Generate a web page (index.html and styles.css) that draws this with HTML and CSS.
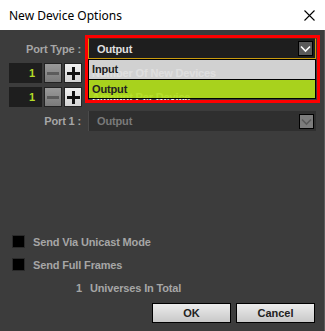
FILE: index.html
```html
<!DOCTYPE html>
<html lang="en">
<head>
  <meta charset="UTF-8">
  <meta name="viewport" content="width=device-width, initial-scale=1.0">
  <title>New Device Options</title>
  <link rel="stylesheet" href="styles.css">
</head>
<body>

<div class="window">
  <div class="titlebar">
    <span class="title">New Device Options</span>
    <svg class="close" width="11" height="11" viewBox="0 0 11 11">
      <path d="M0.5 0.5 L10.5 10.5 M10.5 0.5 L0.5 10.5" stroke="#000" stroke-width="1.1" fill="none"/>
    </svg>
  </div>

  <div class="content">
    <div class="row">
      <span class="field-label">Port Type :</span>
      <div class="select select-open">
        <span class="select-value">Output</span>
        <span class="select-arrow">
          <svg width="13" height="13" viewBox="0 0 13 13"><path d="M2 4.5 L6.5 9 L11 4.5" stroke="#fff" stroke-width="1.6" fill="none"/></svg>
        </span>
        <ul class="dropdown">
          <li>Input</li>
          <li class="selected">Output</li>
        </ul>
        <div class="highlight"></div>
      </div>
    </div>

    <div class="row">
      <div class="stepper">
        <span class="stepper-value">1</span>
        <span class="stepper-btn minus">
          <svg width="16" height="18" viewBox="0 0 16 18"><rect x="2" y="8" width="12" height="3" fill="#5c5c5c"/></svg>
        </span>
        <span class="stepper-btn plus">
          <svg width="16" height="18" viewBox="0 0 16 18"><rect x="2" y="8" width="13" height="3" fill="#111"/><rect x="7" y="3" width="3" height="13" fill="#111"/></svg>
        </span>
      </div>
      <span class="row-label">Number Of New Devices</span>
    </div>

    <div class="row">
      <div class="stepper">
        <span class="stepper-value">1</span>
        <span class="stepper-btn minus">
          <svg width="16" height="18" viewBox="0 0 16 18"><rect x="2" y="8" width="12" height="3" fill="#5c5c5c"/></svg>
        </span>
        <span class="stepper-btn plus">
          <svg width="16" height="18" viewBox="0 0 16 18"><rect x="2" y="8" width="13" height="3" fill="#111"/><rect x="7" y="3" width="3" height="13" fill="#111"/></svg>
        </span>
      </div>
      <span class="row-label">Amount Per Device</span>
    </div>

    <div class="row">
      <span class="field-label">Port 1 :</span>
      <div class="select select-disabled">
        <span class="select-value">Output</span>
        <span class="select-arrow">
          <svg width="13" height="13" viewBox="0 0 13 13"><path d="M2 4.5 L6.5 9 L11 4.5" stroke="#5a5a5a" stroke-width="1.6" fill="none"/></svg>
        </span>
      </div>
    </div>

    <div class="options">
      <div class="check"><span class="checkbox"></span>Send Via Unicast Mode</div>
      <div class="check"><span class="checkbox"></span>Send Full Frames</div>
    </div>

    <div class="total"><span class="total-num">1</span>Universes In Total</div>

    <div class="buttons">
      <button class="btn">OK</button>
      <button class="btn">Cancel</button>
    </div>
  </div>
</div>

</body>
</html>
```

FILE: styles.css
```css
body {
  margin: 0;
  font-family: "Liberation Sans", Arial, sans-serif;
  background-color: #3c3c3c;
}
.window {
  width: 325px;
  height: 331px;
  display: flex;
  flex-direction: column;
  overflow: hidden;
}
.titlebar {
  height: 30px;
  flex-shrink: 0;
  background-color: #fff;
  display: flex;
  align-items: center;
  justify-content: space-between;
  padding: 0 10px 0 9px;
}
.title {
  font-family: "Noto Sans", sans-serif;
  font-size: 12px;
  color: #000;
}
.close {
  display: block;
}
.content {
  flex: 1;
  background-color: #3c3c3c;
  border-right: 1px solid #5a5a5a;
  padding: 8px 8px 0 9px;
  font-size: 11px;
  font-weight: bold;
  letter-spacing: -0.15px;
  color: #a6a6a6;
}
.row {
  display: flex;
  align-items: center;
  margin-bottom: 4px;
}
.field-label {
  width: 72px;
  text-align: right;
  margin-right: 7px;
}
.select {
  position: relative;
  flex: 1;
  height: 20px;
  display: flex;
  align-items: center;
  justify-content: space-between;
  padding: 0 2px 0 8px;
  box-sizing: border-box;
}
.select-open {
  height: 21px;
  background-color: #1e1e1e;
  border: 1px solid #c89b10;
  border-top-color: #3a3020;
  color: #e0e0e0;
  z-index: 2;
}
.select-disabled {
  background-color: #2f2f2f;
  border-left: 1px solid #4a4a4a;
  color: #7a7a7a;
}
.select-arrow {
  width: 15px;
  height: 15px;
  box-sizing: border-box;
  border: 1px solid #000;
  display: flex;
  align-items: center;
  justify-content: center;
}
.select-open .select-arrow {
  background-color: #5a5a5a;
}
.select-disabled .select-arrow {
  background-color: #7c7c7c;
}
.dropdown {
  position: absolute;
  top: 20px;
  left: -1px;
  right: -1px;
  margin: 0;
  padding: 0;
  list-style: none;
  color: #222;
}
.dropdown li {
  height: 19px;
  line-height: 19px;
  padding-left: 3px;
  border: 1px solid #000;
  background-color: rgba(221, 221, 221, 0.93);
}
.dropdown li + li {
  border-top: none;
}
.dropdown li.selected {
  background-color: rgba(176, 222, 27, 0.93);
  height: 18px;
  line-height: 18px;
}
.highlight {
  position: absolute;
  top: -4px;
  left: -4px;
  right: -5px;
  height: 62px;
  border: 3px solid #f00;
  pointer-events: none;
}
.stepper {
  display: flex;
  gap: 2px;
  height: 20px;
}
.stepper-value {
  width: 33px;
  background-color: #1e1e1e;
  color: #b4dc28;
  text-align: right;
  line-height: 20px;
  padding-right: 7px;
  box-sizing: border-box;
}
.stepper-btn {
  width: 18px;
  height: 20px;
  box-sizing: border-box;
  border: 1px solid #222;
  display: flex;
  align-items: center;
  justify-content: center;
}
.stepper-btn.minus {
  background: linear-gradient(#9a9a9a, #7a7a7a);
}
.stepper-btn.plus {
  background: linear-gradient(#f0f0f0, #d4d4d4);
}
.row-label {
  margin-left: 10px;
  color: #fff;
}
.options {
  margin-top: 104px;
  padding-left: 3px;
}
.check {
  display: flex;
  align-items: center;
  height: 13px;
  margin-bottom: 10px;
}
.checkbox {
  width: 13px;
  height: 13px;
  box-sizing: border-box;
  background-color: #000;
  border: 1px solid #2a2a2a;
  margin-right: 8px;
}
.total {
  display: flex;
  line-height: 14px;
  margin-top: 10px;
  padding-left: 67px;
}
.total-num {
  width: 14px;
}
.buttons {
  display: flex;
  justify-content: flex-end;
  gap: 5px;
  margin-top: 8px;
  padding-right: 1px;
}
.btn {
  width: 79px;
  height: 20px;
  border: 1px solid #000;
  background: linear-gradient(#ececec, #c8c8c8);
  font-family: "Liberation Sans", Arial, sans-serif;
  font-size: 11px;
  font-weight: bold;
  color: #222;
  padding: 0;
}
```
